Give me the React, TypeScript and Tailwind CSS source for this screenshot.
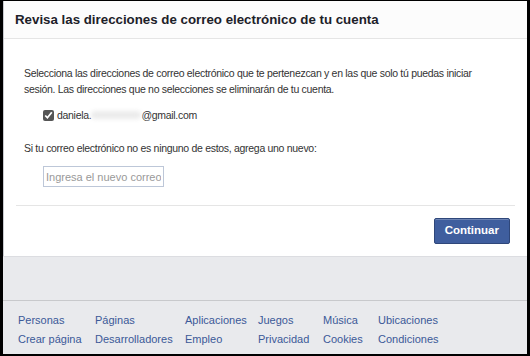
const row1 = ["Personas", "Páginas", "Aplicaciones", "Juegos", "Música", "Ubicaciones"];
const row2 = ["Crear página", "Desarrolladores", "Empleo", "Privacidad", "Cookies", "Condiciones"];
const cols = ["w-[77px]", "w-[90px]", "w-[73px]", "w-[65px]", "w-[55px]", "w-[80px]"];

export default function App() {
  return (
    <div className="h-[356px] w-[530px] overflow-hidden border-l-[3px] border-r-[3px] border-t border-b-2 border-black bg-[#e9eaed] font-['Liberation_Sans',Arial,sans-serif] text-[10.5px] text-[#333]">
      <div className="border-l border-[#c8cacf] bg-white">
        <div className="flex h-[38px] items-center border-b border-[#e5e5e5] bg-[#fcfcfc] pl-[11px] text-[13.3px] font-bold text-[#1d2129]">
          Revisa las direcciones de correo electrónico de tu cuenta
        </div>
        <div className="px-[12px]">
          <div className="px-[8px] pt-[26px] leading-[16px] tracking-[-0.3px]">
            <p className="w-[462px]">
              Selecciona las direcciones de correo electrónico que te pertenezcan y en las que solo tú puedas iniciar
              sesión. Las direcciones que no selecciones se eliminarán de tu cuenta.
            </p>
            <label className="mt-[10px] flex items-center pl-[19px]">
              <input type="checkbox" defaultChecked className="m-0 mr-[3px] h-[11px] w-[11px] accent-[#555]" />
              <span>daniela.</span>
              <span className="inline-block h-[8px] w-[50px] rounded-full bg-[#ebebeb] blur-[2px]" />
              <span>@gmail.com</span>
            </label>
            <p className="mt-[17px]">Si tu correo electrónico no es ninguno de estos, agrega uno nuevo:</p>
            <input
              placeholder="Ingresa el nuevo correo electrónico"
              className="ml-[19px] mt-[10px] h-[21px] w-[121px] border border-[#bdc7d8] px-[2px] text-[11px] tracking-normal placeholder:text-[#999] outline-none"
            />
          </div>
          <div className="mt-[18px] border-t border-[#e5e5e5]" />
          <div className="flex justify-end pb-[12px] pr-[5px] pt-[12px]">
            <button className="h-[26px] rounded-[2px] border border-[#2f477a] bg-[#3f5e9e] px-[10px] text-[11.5px] font-bold text-white shadow-[inset_0_1px_0_#6d84b4]">
              Continuar
            </button>
          </div>
        </div>
      </div>
      <div className="h-[44px] border-t border-[#dcdde1]" />
      <div className="border-t border-[#c8c9cc] pl-[15px] pt-[10px] text-[11px] leading-[19px] text-[#3b5998]">
        {[row1, row2].map((row, r) => (
          <div key={r} className="flex">
            {row.map((t, i) => (
              <span key={t} className={cols[i]}>
                {t}
              </span>
            ))}
          </div>
        ))}
      </div>
    </div>
  );
}
